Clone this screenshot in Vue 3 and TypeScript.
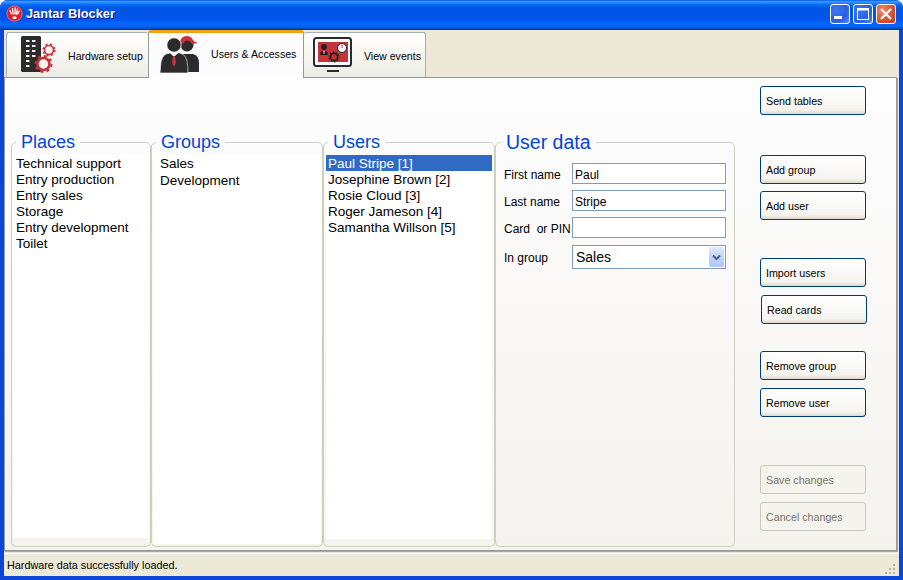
<script setup lang="ts">
const places: string[] = ['Technical support', 'Entry production', 'Entry sales', 'Storage', 'Entry development', 'Toilet']
const groups: string[] = ['Sales', 'Development']
const users: string[] = ['Paul Stripe [1]', 'Josephine Brown [2]', 'Rosie Cloud [3]', 'Roger Jameson [4]', 'Samantha Willson [5]']
const fields = [
  { label: 'First name', value: 'Paul' },
  { label: 'Last name', value: 'Stripe' },
  { label: 'Card  or PIN', value: '' },
]
const buttons = [
  { text: 'Send tables', top: 0, shift: false, off: false },
  { text: 'Add group', top: 40, shift: false, off: false },
  { text: 'Add user', top: 7, shift: false, off: false },
  { text: 'Import users', top: 38, shift: false, off: false },
  { text: 'Read cards', top: 8, shift: true, off: false },
  { text: 'Remove group', top: 27, shift: false, off: false },
  { text: 'Remove user', top: 8, shift: false, off: false },
  { text: 'Save changes', top: 48, shift: false, off: true },
  { text: 'Cancel changes', top: 8, shift: false, off: true },
]
</script>

<template>
  <div class="window">
    <header class="titlebar">
      <svg class="app-icon" width="17" height="17" viewBox="0 0 17 17">
        <circle cx="8.5" cy="8.5" r="8" fill="#d8232a" />
        <circle cx="8.5" cy="8.5" r="7.6" fill="none" stroke="#f0a0a0" stroke-width=".6" />
        <path d="M4 5.5 L5.5 9 M6.5 3.5 L7.3 9 M9.2 3 L9 9 M11.5 3.8 L10.4 9 M13.3 6 L11.6 9" stroke="#fff" stroke-width="1.3" stroke-linecap="round" />
        <rect x="6.5" y="11.5" width="4" height="2.4" rx="1" fill="#fff" />
      </svg>
      <span class="title">Jantar Blocker</span>
      <div class="controls">
        <span class="ctl blue">
          <svg width="20" height="20" viewBox="0 0 20 20"><rect x="4" y="12" width="8" height="3" fill="#fff" /></svg>
        </span>
        <span class="ctl blue">
          <svg width="20" height="20" viewBox="0 0 20 20"><rect x="4.5" y="4.5" width="11" height="11" fill="none" stroke="#fff" /><rect x="4" y="4" width="12" height="2.5" fill="#fff" /></svg>
        </span>
        <span class="ctl red">
          <svg width="20" height="20" viewBox="0 0 20 20"><path d="M5 5 L15 15 M15 5 L5 15" stroke="#fff" stroke-width="2.2" /></svg>
        </span>
      </div>
    </header>

    <div class="client">
      <nav class="tabs">
        <div class="tab tab-hw">
          <svg width="36" height="40" viewBox="0 0 36 40">
            <rect x="0" y="1" width="20" height="36" rx="1.5" fill="#2b2b2b" />
            <g fill="#eee">
              <rect x="5" y="5" width="3.5" height="2" /><rect x="11" y="5" width="3.5" height="2" />
              <rect x="5" y="10" width="3.5" height="2" /><rect x="11" y="10" width="3.5" height="2" />
              <rect x="5" y="15" width="3.5" height="2" /><rect x="11" y="15" width="3.5" height="2" />
              <rect x="5" y="20" width="3.5" height="2" /><rect x="11" y="20" width="3.5" height="2" />
              <rect x="5" y="25" width="3.5" height="2" />
              <rect x="5" y="30" width="3.5" height="2" />
            </g>
            <g fill="none" stroke="#c8323a">
              <circle cx="28" cy="15" r="4.5" stroke-width="1.6" fill="#f5f4ef" />
              <circle cx="28" cy="15" r="5.8" stroke-width="1.6" stroke-dasharray="2.2 2.4" />
              <circle cx="22.5" cy="29" r="6" stroke-width="2.6" fill="#f5f4ef" />
              <circle cx="22.5" cy="29" r="8" stroke-width="2" stroke-dasharray="3 3.3" />
            </g>
          </svg>
          <span class="tab-text">Hardware setup</span>
        </div>
        <div class="tab tab-active">
          <svg width="40" height="38" viewBox="0 0 40 38">
            <circle cx="27" cy="9" r="6.5" fill="#2b2b2b" />
            <path d="M20 6 Q21 0 27 0 Q31 0 33 4 Q34 6 38 7 L32 8 Q29 3 25 5 Q24 8 20 8Z" fill="#c8323a" />
            <path d="M21 18 L33 18 Q39 20 39 27 L39 36 L22 36Z" fill="#2b2b2b" />
            <circle cx="14" cy="9" r="7.2" fill="#2b2b2b" stroke="#fff" stroke-width=".8" />
            <path d="M6 18 L10 17 L20 17 L24 19 Q28 23 28 37 L0 37 L1 26 Q2 20 6 18Z" fill="#2b2b2b" stroke="#fff" stroke-width=".6" />
            <path d="M10 17 L14 21 L18 17Z" fill="#fff" />
            <path d="M13 20 L15 20 L16 27 L14 31 L12 27Z" fill="#c8323a" />
          </svg>
          <span class="active-text">Users &amp; Accesses</span>
        </div>
        <div class="tab tab-ev">
          <svg width="40" height="36" viewBox="0 0 40 36">
            <rect x="1" y="1" width="37" height="28" rx="2.5" fill="#fff" stroke="#2b2b2b" stroke-width="2" />
            <rect x="5" y="5" width="30" height="20" fill="#c8323a" />
            <circle cx="11" cy="10" r="3" fill="#222" />
            <path d="M7 18 Q7 14 10 14 L12 14 Q15 14 15 18Z" fill="#222" />
            <path d="M10.3 14 L11.7 14 L11.3 17 L10.7 17Z" fill="#e8e8e8" />
            <circle cx="29" cy="11" r="4.5" fill="#fff" stroke="#222" />
            <path d="M29 8 L29 11" stroke="#c8323a" />
            <circle cx="21" cy="20" r="3.6" fill="none" stroke="#222" stroke-width="1.8" />
            <circle cx="21" cy="20" r="5" fill="none" stroke="#222" stroke-width="1.2" stroke-dasharray="1.5 1.6" />
            <rect x="14" y="33" width="12" height="2" fill="#2b2b2b" />
          </svg>
          <span class="tab-text">View events</span>
        </div>
      </nav>

      <main class="panel">
        <div class="columns">
          <fieldset class="box box-places">
            <legend>Places</legend>
            <ul class="list list-places">
              <li v-for="p in places" :key="p">{{ p }}</li>
            </ul>
          </fieldset>
          <fieldset class="box box-groups">
            <legend>Groups</legend>
            <ul class="list list-groups">
              <li v-for="g in groups" :key="g">{{ g }}</li>
            </ul>
          </fieldset>
          <fieldset class="box box-users">
            <legend>Users</legend>
            <ul class="list list-users">
              <li v-for="(u, i) in users" :key="u" :class="{ selected: i === 0 }">{{ u }}</li>
            </ul>
          </fieldset>
          <fieldset class="box box-data">
            <legend>User data</legend>
            <div class="form">
              <label v-for="f in fields" :key="f.label" class="row">
                <span class="lbl">{{ f.label }}</span>
                <input class="input" type="text" :value="f.value" />
              </label>
              <div class="row row-combo">
                <span class="lbl">In group</span>
                <div class="combo">
                  <span class="combo-text">Sales</span>
                  <span class="combo-btn">
                    <svg width="9" height="7" viewBox="0 0 9 7"><path d="M1 1.5 L4.5 5 L8 1.5" fill="none" stroke="#4d6185" stroke-width="2" /></svg>
                  </span>
                </div>
              </div>
            </div>
          </fieldset>
        </div>
        <aside class="actions">
          <button
            v-for="b in buttons"
            :key="b.text"
            class="btn"
            :class="{ shift: b.shift, off: b.off }"
            :style="{ marginTop: b.top + 'px' }"
            :disabled="b.off"
            type="button"
          >{{ b.text }}</button>
        </aside>
      </main>

      <footer class="status">
        <span>Hardware data successfully loaded.</span>
        <svg class="grip" width="12" height="12" viewBox="0 0 12 12" fill="#b5b2a2">
          <rect x="9" y="1" width="2" height="2" /><rect x="5" y="5" width="2" height="2" /><rect x="9" y="5" width="2" height="2" />
          <rect x="1" y="9" width="2" height="2" /><rect x="5" y="9" width="2" height="2" /><rect x="9" y="9" width="2" height="2" />
        </svg>
      </footer>
    </div>
  </div>
</template>

<style>
html, body { margin: 0; background: #fff; }
</style>

<style scoped>
.window {
  width: 903px;
  height: 580px;
  box-sizing: border-box;
  display: flex;
  flex-direction: column;
  overflow: hidden;
  border-radius: 8px 8px 0 0;
  background: #0a46d8;
  padding: 0 4px 4px;
  font-family: "Liberation Sans", Arial, sans-serif;
  color: #000;
}
.titlebar {
  height: 30px;
  flex: none;
  margin: 0 -4px;
  padding: 0 7px 0 6px;
  display: flex;
  align-items: center;
  background: linear-gradient(180deg, #0058e6 0%, #3a93ff 5%, #288eff 9%, #127dff 12%, #036ffc 15%, #0262ee 20%, #0057e5 28%, #0054e3 35%, #0055eb 60%, #005bf5 70%, #026afe 80%, #0062ef 88%, #0052d6 94%, #0040ab 97%, #003092 100%);
}
.app-icon { flex: none; margin-top: -3px; }
.title {
  margin-left: 3px;
  margin-top: -3px;
  font-size: 12.8px;
  font-weight: 700;
  color: #fff;
  text-shadow: 1px 1px 0 #0f1089;
}
.controls { margin-left: auto; margin-top: -3px; display: flex; gap: 3px; }
.ctl {
  width: 20px;
  height: 20px;
  box-sizing: border-box;
  display: flex;
  align-items: center;
  justify-content: center;
  border: 1px solid #fff;
  border-radius: 3px;
}
.ctl svg { margin: -1px; flex: none; }
.ctl.blue { background: radial-gradient(circle at 30% 30%, #3a78ee 0%, #2a5fe0 60%, #5b8bf5 100%); }
.ctl.red { background: radial-gradient(circle at 30% 30%, #ee8a68 0%, #d9512c 60%, #c23a12 100%); }

.client {
  flex: 1;
  min-height: 0;
  display: flex;
  flex-direction: column;
  background: #ece9d8;
}
.tabs {
  height: 47px;
  flex: none;
  padding-left: 2px;
  display: flex;
  align-items: flex-end;
  position: relative;
  z-index: 1;
}
.tab {
  box-sizing: border-box;
  display: flex;
  align-items: center;
  font-size: 10.6px;
  height: 46px;
  border: 1px solid #a3b0b6;
  border-bottom-color: #919b9c;
  border-radius: 3px 3px 0 0;
  background: linear-gradient(180deg, #fff 0%, #f5f4ef 60%, #ecebe5 100%);
  margin-bottom: -1px;
}
.tab-text { margin-top: 1px; }
.active-text { margin-bottom: 2px; }
.tab-hw { width: 142px; padding-left: 14px; gap: 11px; border-right: 0; }
.tab-active {
  width: 156px;
  height: 48px;
  padding-left: 11px;
  gap: 11px;
  padding-bottom: 2px;
  background: #fcfcfe;
  border: 1px solid #919b9c;
  border-top: 3px solid #f0a30f;
  border-bottom: 0;
  border-radius: 3px 3px 0 0;
}
.tab-ev { width: 122px; padding-left: 9px; gap: 11px; border-left: 0; }
.tab svg { flex: none; }

.panel {
  flex: 1;
  min-height: 0;
  display: flex;
  box-sizing: border-box;
  border: 1px solid #919b9c;
  box-shadow: 1px 1px 0 #aca899;
  background: linear-gradient(180deg, #fdfdfe 0%, #f4f3ee 100%);
  width: 893px;
}
.columns {
  width: 730px;
  flex: none;
  box-sizing: border-box;
  padding: 54px 0 3px 6px;
  display: flex;
}
.box {
  margin: 0;
  padding: 0;
  min-width: 0;
  box-sizing: border-box;
  display: flex;
  flex-direction: column;
  border: 1px solid #cfcfbd;
  border-radius: 5px;
}
.box legend {
  margin-left: 4px;
  padding: 0 5px;
  height: 20px;
  line-height: 20px;
  font-size: 18px;
  color: #0046d5;
}
.box-places { width: 140px; }
.box-groups { width: 172px; }
.box-users { width: 172px; }
.box-data { width: 240px; }
.box-data legend { font-size: 19.5px; margin-left: 5px; }
.list {
  list-style: none;
  margin: 3px 1px 0;
  padding: 0;
  flex: 1;
  background: #fff;
  font-size: 13.5px;
}
.list li { line-height: 16px; height: 16px; }
.list-places { margin-bottom: 8px; padding: 1px 0 0 3px; }
.list-groups { padding-left: 7px; margin-bottom: 2px; }
.list-groups li { height: 17px; line-height: 17px; }
.list-users { margin: 3px 2px 7px 2px; padding-top: 0; }
.list-users li { padding-left: 2px; position: relative; top: 0; height: 16px; line-height: 18px; }
.list-users li.selected { background: #316ac5; color: #fff; }
.form {
  padding: 11px 0 0 8px;
  display: flex;
  flex-direction: column;
  gap: 6px;
}
.row { display: flex; align-items: center; }
.row-combo { margin-top: 1px; }
.lbl { width: 68px; flex: none; font-size: 12px; white-space: pre; padding-top: 2px; }
.input {
  width: 154px;
  height: 21px;
  box-sizing: border-box;
  margin: 0;
  border: 1px solid #7f9db9;
  padding: 2px 2px 0;
  background: #fff;
  font: 12px "Liberation Sans", Arial, sans-serif;
  color: #000;
  outline: none;
}
.combo {
  width: 154px;
  height: 24px;
  box-sizing: border-box;
  border: 1px solid #7f9db9;
  background: #fff;
  display: flex;
  align-items: center;
  padding: 0 1px 0 3px;
}
.combo-text { font-size: 14px; flex: 1; }
.combo-btn {
  width: 15px;
  height: 20px;
  display: flex;
  align-items: center;
  justify-content: center;
  border-radius: 2px;
  background: linear-gradient(180deg, #dfe9fd 0%, #c2d4f8 50%, #aec5f5 100%);
}
.actions {
  flex: none;
  padding: 8px 0 0 25px;
  display: flex;
  flex-direction: column;
  align-items: flex-start;
}
.btn {
  width: 106px;
  height: 29px;
  flex: none;
  box-sizing: border-box;
  padding: 0 0 0 5px;
  border: 1px solid #003c74;
  border-radius: 3px;
  background: linear-gradient(180deg, #fff 0%, #f5f4ef 85%, #dcd8ca 100%);
  font: 10.7px "Liberation Sans", Arial, sans-serif;
  color: #000;
  text-align: left;
}
.btn.shift { margin-left: 1px; }
.btn.off {
  border-color: #cac8bb;
  background: #f4f3ee;
  color: #75756a;
}
.status {
  height: 23px;
  flex: none;
  margin-top: 2px;
  padding: 0 3px;
  display: flex;
  align-items: center;
  justify-content: space-between;
  font-size: 10.8px;
  border-top: 1px solid #fff;
  box-sizing: border-box;
}
.grip { align-self: flex-end; margin-bottom: 1px; }
</style>
